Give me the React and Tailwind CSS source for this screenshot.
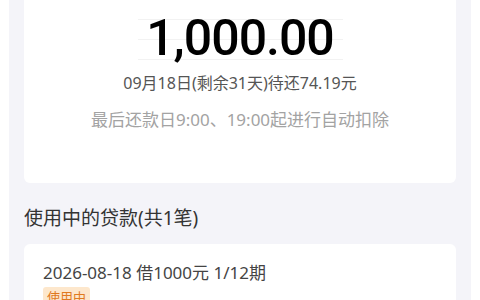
export default function App() {
  const cjk = { fontFamily: '"Noto Sans", "Noto Sans CJK SC", sans-serif' };
  return (
    <div className="w-[480px] h-[300px] overflow-hidden bg-white" style={cjk}>
      <div className="mx-[9px] h-full bg-[#f4f4f9] px-[15px]">
        <div className="h-[183px] rounded-b-[6px] bg-white flex flex-col items-center">
          <div className="mt-[8px] h-[60px] w-[205px] flex items-center justify-center bg-[repeating-linear-gradient(to_bottom,transparent_0px,transparent_11px,#f2f2f2_11px,#f2f2f2_12px,transparent_12px,transparent_20px)]">
            <span className="text-[50px] leading-none font-medium text-black tracking-[-1px]" style={{ fontFamily: 'Roboto, sans-serif' }}>1,000.00</span>
          </div>
          <div className="mt-[4px] text-[16px] leading-[22px] text-[#555]">09月18日(剩余31天)待还74.19元</div>
          <div className="mt-[14px] text-[17px] leading-[24px] text-[#a3a3a3]">最后还款日9:00、19:00起进行自动扣除</div>
        </div>
        <div className="mt-[22px] text-[19px] leading-[26px] text-[#333]">使用中的贷款(共1笔)</div>
        <div className="mt-[13px] rounded-[6px] bg-white px-[19px] pt-[17px] h-[80px] flex flex-col items-start gap-[2px]">
          <div className="text-[17px] leading-[24px] text-[#444]">2026-08-18 借1000元 1/12期</div>
          <div className="rounded-[3px] bg-[#fde7cc] px-[4px] text-[13px] leading-[20px] text-[#e07a1f]">使用中</div>
        </div>
      </div>
    </div>
  );
}
